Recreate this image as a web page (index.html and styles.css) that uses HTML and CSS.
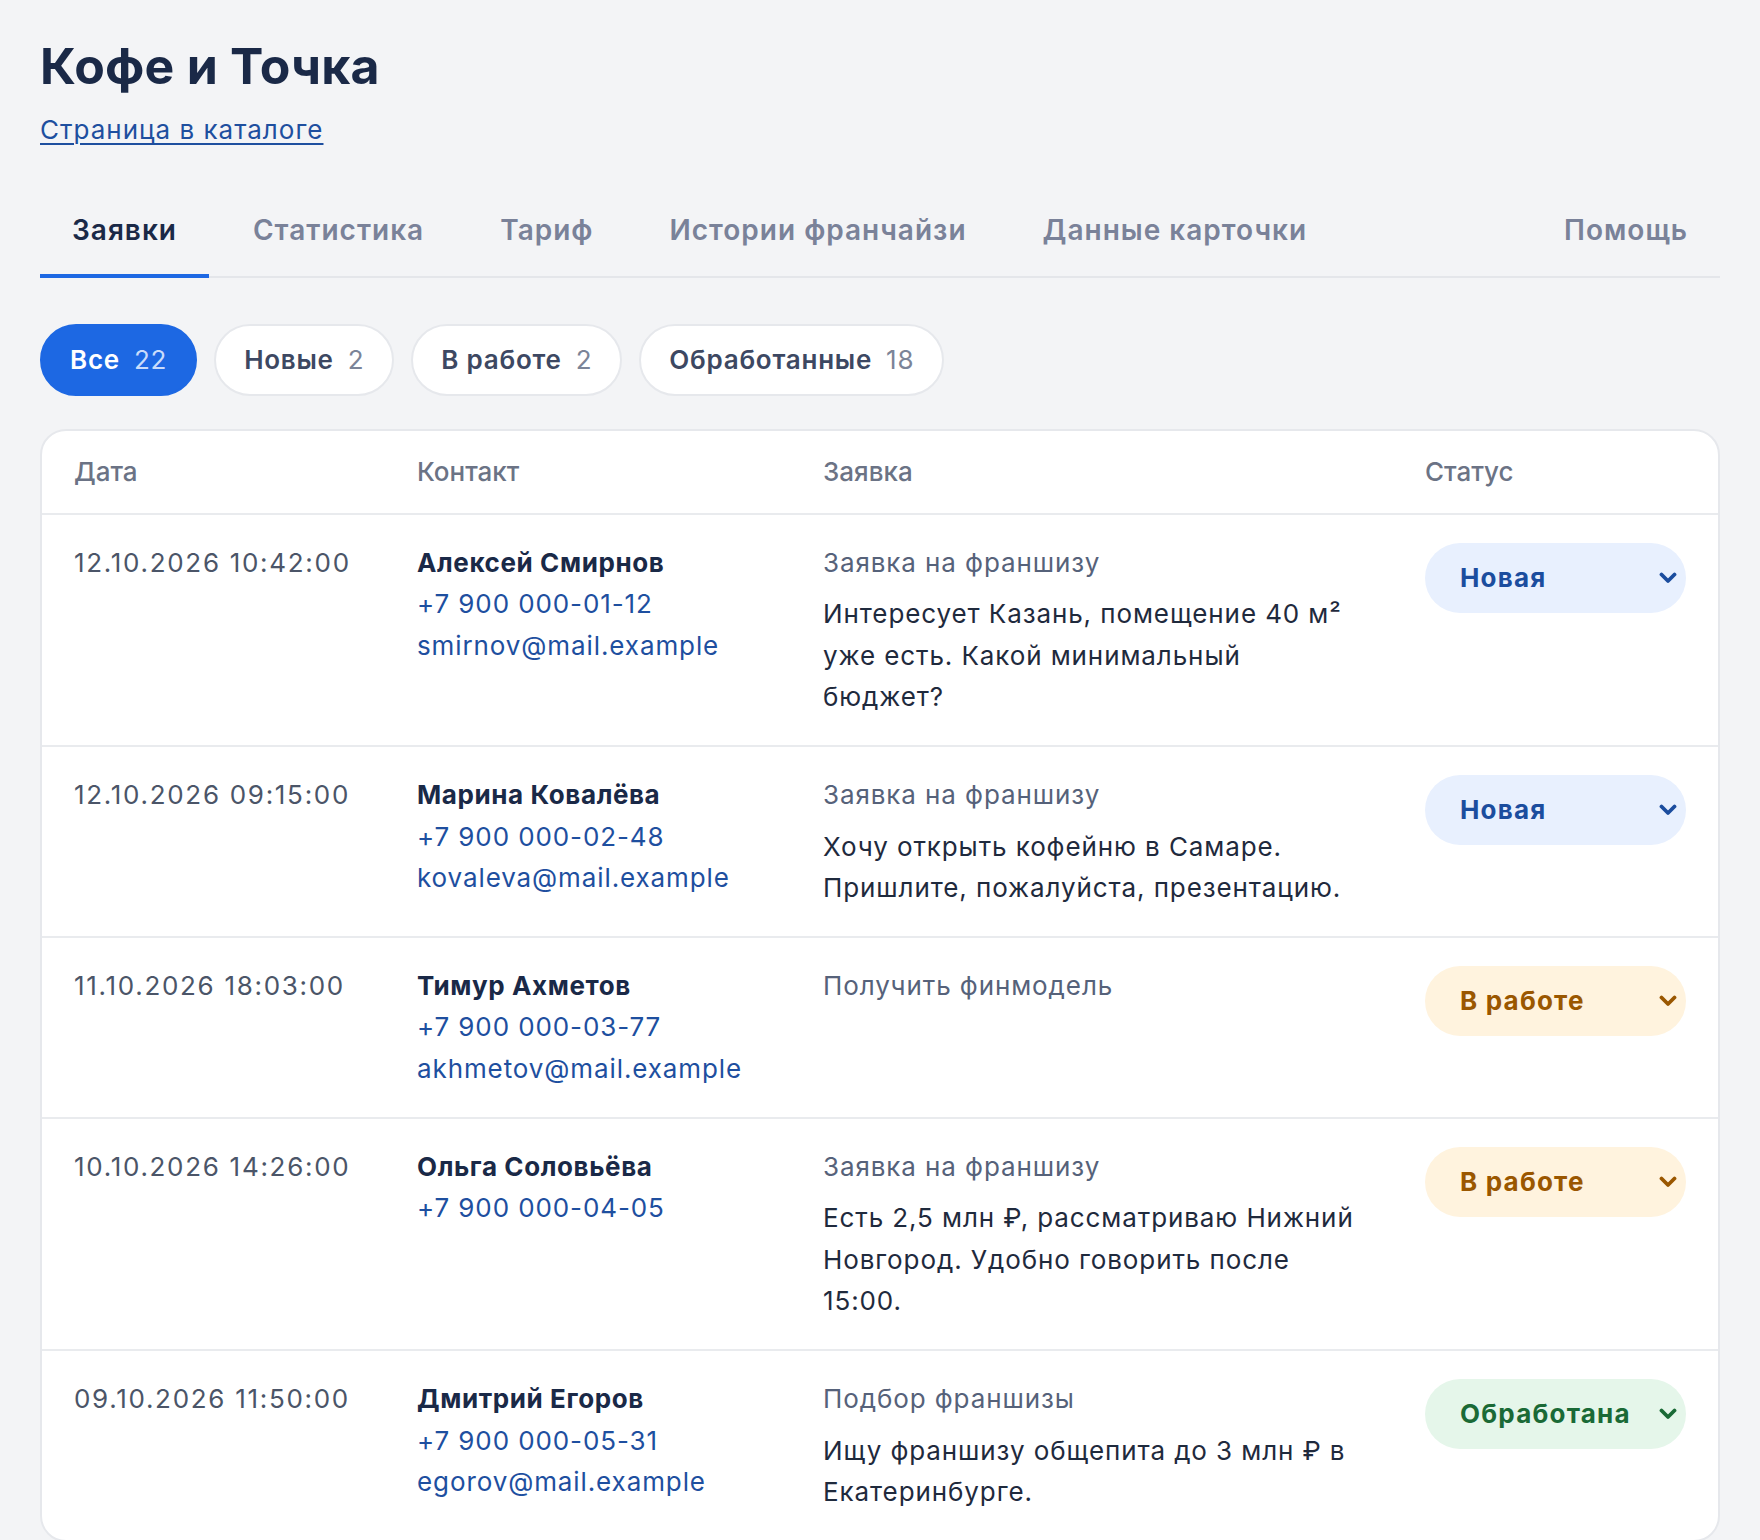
FILE: index.html
```html
<!DOCTYPE html>
<html lang="ru">
<head>
<meta charset="utf-8">
<title>Кофе и Точка — Заявки</title>
<link rel="stylesheet" href="styles.css">
</head>
<body>
<div class="page">
  <header class="head">
    <h1 class="title">Кофе и Точка</h1>
    <a class="catalog-link" href="#">Страница в каталоге</a>
  </header>

  <nav class="tabs">
    <a class="tab tab-active" href="#">Заявки</a>
    <a class="tab" href="#">Статистика</a>
    <a class="tab" href="#">Тариф</a>
    <a class="tab" href="#">Истории франчайзи</a>
    <a class="tab" href="#">Данные карточки</a>
    <a class="tab tab-help" href="#">Помощь</a>
  </nav>

  <div class="filters">
    <button class="pill pill-active"><span class="pill-label">Все</span><span class="pill-count">22</span></button>
    <button class="pill"><span class="pill-label">Новые</span><span class="pill-count">2</span></button>
    <button class="pill"><span class="pill-label">В работе</span><span class="pill-count">2</span></button>
    <button class="pill"><span class="pill-label">Обработанные</span><span class="pill-count">18</span></button>
  </div>

  <section class="card">
    <div class="row row-head">
      <div class="cell">Дата</div>
      <div class="cell">Контакт</div>
      <div class="cell">Заявка</div>
      <div class="cell">Статус</div>
    </div>

    <div class="row">
      <div class="cell date">12.10.2026 10:42:00</div>
      <div class="cell contact">
        <div class="name">Алексей Смирнов</div>
        <a class="clink" href="#">+7 900 000-01-12</a>
        <a class="clink" href="#">smirnov@mail.example</a>
      </div>
      <div class="cell request">
        <div class="req-title">Заявка на франшизу</div>
        <div class="req-text">Интересует Казань, помещение 40 м² уже есть. Какой минимальный бюджет?</div>
      </div>
      <div class="cell">
        <div class="status status-new"><span>Новая</span><svg class="chev" viewBox="0 0 18 12"><path d="M2.5 2.5 L9 9 L15.5 2.5"/></svg></div>
      </div>
    </div>

    <div class="row">
      <div class="cell date">12.10.2026 09:15:00</div>
      <div class="cell contact">
        <div class="name">Марина Ковалёва</div>
        <a class="clink" href="#">+7 900 000-02-48</a>
        <a class="clink" href="#">kovaleva@mail.example</a>
      </div>
      <div class="cell request">
        <div class="req-title">Заявка на франшизу</div>
        <div class="req-text">Хочу открыть кофейню в Самаре. Пришлите, пожалуйста, презентацию.</div>
      </div>
      <div class="cell">
        <div class="status status-new"><span>Новая</span><svg class="chev" viewBox="0 0 18 12"><path d="M2.5 2.5 L9 9 L15.5 2.5"/></svg></div>
      </div>
    </div>

    <div class="row">
      <div class="cell date">11.10.2026 18:03:00</div>
      <div class="cell contact">
        <div class="name">Тимур Ахметов</div>
        <a class="clink" href="#">+7 900 000-03-77</a>
        <a class="clink" href="#">akhmetov@mail.example</a>
      </div>
      <div class="cell request">
        <div class="req-title">Получить финмодель</div>
      </div>
      <div class="cell">
        <div class="status status-work"><span>В работе</span><svg class="chev" viewBox="0 0 18 12"><path d="M2.5 2.5 L9 9 L15.5 2.5"/></svg></div>
      </div>
    </div>

    <div class="row">
      <div class="cell date">10.10.2026 14:26:00</div>
      <div class="cell contact">
        <div class="name">Ольга Соловьёва</div>
        <a class="clink" href="#">+7 900 000-04-05</a>
      </div>
      <div class="cell request">
        <div class="req-title">Заявка на франшизу</div>
        <div class="req-text">Есть 2,5 млн ₽, рассматриваю Нижний Новгород. Удобно говорить после 15:00.</div>
      </div>
      <div class="cell">
        <div class="status status-work"><span>В работе</span><svg class="chev" viewBox="0 0 18 12"><path d="M2.5 2.5 L9 9 L15.5 2.5"/></svg></div>
      </div>
    </div>

    <div class="row">
      <div class="cell date">09.10.2026 11:50:00</div>
      <div class="cell contact">
        <div class="name">Дмитрий Егоров</div>
        <a class="clink" href="#">+7 900 000-05-31</a>
        <a class="clink" href="#">egorov@mail.example</a>
      </div>
      <div class="cell request">
        <div class="req-title">Подбор франшизы</div>
        <div class="req-text">Ищу франшизу общепита до 3 млн ₽ в Екатеринбурге.</div>
      </div>
      <div class="cell">
        <div class="status status-done"><span>Обработана</span><svg class="chev" viewBox="0 0 18 12"><path d="M2.5 2.5 L9 9 L15.5 2.5"/></svg></div>
      </div>
    </div>
  </section>
</div>
</body>
</html>
```

FILE: styles.css
```css
* { box-sizing: border-box; }

html, body {
  margin: 0;
  padding: 0;
  background: #f3f4f6;
}

body {
  font-family: Inter, "Noto Sans", "Liberation Sans", sans-serif;
  color: #1f2a3d;
  font-size: 26px;
  line-height: 41.6px;
  letter-spacing: 0.9px;
}

.page {
  padding: 36px 40px 40px;
}

.head {
  display: flex;
  flex-direction: column;
  align-items: flex-start;
}

.title {
  margin: 0;
  font-size: 50px;
  line-height: 60px;
  font-weight: 700;
  letter-spacing: 0.2px;
  color: #1a2947;
}

.catalog-link {
  margin-top: 16px;
  font-size: 26px;
  line-height: 36px;
  letter-spacing: 1px;
  color: #1e4f9f;
  text-decoration: underline;
  text-underline-offset: 4px;
  text-decoration-thickness: 2px;
}

.tabs {
  display: flex;
  gap: 12px;
  margin-top: 40px;
  border-bottom: 2px solid #e4e6ea;
}

.tab {
  display: block;
  padding: 25px 32px 27px;
  font-size: 28px;
  line-height: 34px;
  font-weight: 600;
  letter-spacing: 1px;
  color: #7a8299;
  text-decoration: none;
  border-bottom: 4px solid transparent;
  margin-bottom: -2px;
}

.tab-active {
  color: #1a2947;
  border-bottom-color: #1d68e3;
}

.tab-help {
  margin-left: auto;
}

.filters {
  display: flex;
  gap: 17px;
  margin-top: 46px;
}

.pill {
  display: flex;
  align-items: center;
  gap: 14px;
  padding: 18px 28px;
  font-family: inherit;
  font-size: 26px;
  line-height: 32px;
  letter-spacing: 0.75px;
  border-radius: 999px;
  border: 2px solid #e6e8ec;
  background: #ffffff;
  color: #3d4862;
  cursor: pointer;
}

.pill-label {
  font-weight: 600;
}

.pill-count {
  font-weight: 400;
  color: #7b8498;
}

.pill-active {
  background: #1d68e3;
  border-color: #1d68e3;
  color: #ffffff;
}

.pill-active .pill-count {
  color: #c9dcfb;
}

.card {
  margin-top: 33px;
  background: #ffffff;
  border: 2px solid #e6e8ec;
  border-radius: 26px;
  overflow: hidden;
}

.row {
  display: grid;
  grid-template-columns: 343px 406px 602px 1fr;
  border-top: 2px solid #e9ebee;
}

.row-head {
  border-top: none;
}

.cell {
  padding: 27px 32px;
}

.row-head .cell {
  padding: 20px 32px;
  font-weight: 500;
  letter-spacing: 0;
  color: #6b7385;
}

.date {
  color: #4b5568;
  white-space: nowrap;
  letter-spacing: 1.7px;
}

.contact {
  display: flex;
  flex-direction: column;
  align-items: flex-start;
}

.name {
  font-weight: 700;
  letter-spacing: 0.6px;
  color: #1a2947;
}

.clink {
  color: #1e4f9f;
  text-decoration: none;
  white-space: nowrap;
}

.req-title {
  color: #56627a;
  margin-bottom: 10px;
}

.req-text {
  color: #1f2a3d;
}

.status {
  display: flex;
  align-items: center;
  justify-content: space-between;
  height: 70px;
  padding: 0 9px 0 35px;
  border-radius: 999px;
  font-weight: 700;
  font-size: 26px;
  letter-spacing: 1.2px;
  margin-top: 1px;
}

.chev {
  width: 18px;
  height: 12px;
  flex: none;
}

.chev path {
  fill: none;
  stroke: currentColor;
  stroke-width: 3.8;
  stroke-linecap: round;
  stroke-linejoin: round;
}

.status-new {
  background: #e8f0fe;
  color: #1b4d9e;
}

.status-work {
  background: #fff3de;
  color: #9a5700;
}

.status-done {
  background: #e5f6ea;
  color: #1a6a36;
}
```
